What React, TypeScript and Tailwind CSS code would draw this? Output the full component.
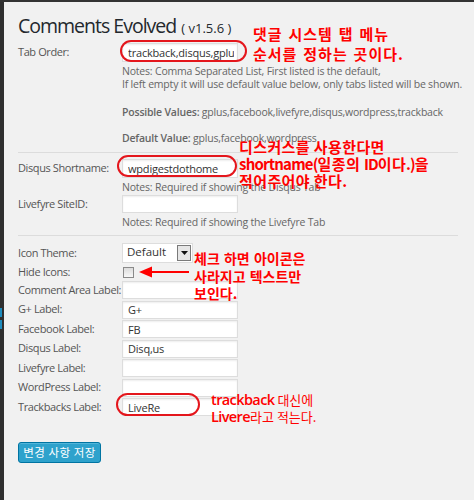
import React from "react";

const LABEL = "w-[104px] shrink-0 text-[11px] tracking-[-0.4px] text-[#555] whitespace-nowrap";
const NOTE = "text-[10.5px] leading-[13px] tracking-[-0.2px] text-[#666]";

function Field({ value = "", h = "h-[18px]" }: { value?: string; h?: string }) {
  return (
    <input
      readOnly
      value={value}
      className={`w-[116px] ${h} bg-white border border-[#dddddd] shadow-[inset_0_1px_2px_rgba(0,0,0,0.07)] pl-[5px] pr-[3px] text-[11px] tracking-[-0.2px] text-[#333] outline-none font-['Open_Sans',sans-serif]`}
    />
  );
}

function Row({ label, children, className = "" }: { label: string; children: React.ReactNode; className?: string }) {
  return (
    <div className={`flex items-center ${className}`}>
      <div className={LABEL}>{label}</div>
      {children}
    </div>
  );
}

export default function App() {
  const red = "text-[#ff0000] font-['Noto_Sans_CJK_KR',sans-serif]";
  return (
    <div className="relative w-[474px] h-[500px] bg-[#f1f1f1] border-t-2 border-[#333] flex overflow-hidden font-['Open_Sans','Noto_Sans_CJK_KR',sans-serif]">
      {/* admin sidebar edge */}
      <div className="w-[4px] shrink-0 bg-[#2f2f2f] flex flex-col">
        <div className="h-[306px]" />
        <div className="h-[9px] w-[2px] bg-[#1e8cbe]" />
        <div className="h-[3px]" />
        <div className="h-[9px] w-[2px] bg-[#1e8cbe]" />
      </div>

      <div className="flex-1 pl-[14px] flex flex-col">
        <h2 className="mt-[11.5px] leading-[24px] text-[19.5px] tracking-[-1px] text-[#23282d] whitespace-nowrap">
          Comments Evolved <span className="text-[13px] tracking-[0px] ml-[1px]">( v1.5.6 )</span>
        </h2>

        <Row label="Tab Order:" className="mt-[3.5px]">
          <Field value="trackback,disqus,gplus" h="h-[19px]" />
        </Row>
        <div className="pl-[104px]">
          <p className={`${NOTE} mt-[2.5px]`}>
            <span>Notes:</span> Comma Separated List, First listed is the default,
            <br />
            If left empty it will use default value below, only tabs listed will be shown.
          </p>
          <p className={`${NOTE} mt-[15px]`}>
            <span className="font-semibold">Possible Values:</span> gplus,facebook,livefyre,disqus,wordpress,trackback
          </p>
          <p className={`${NOTE} mt-[13px]`}>
            <span className="font-semibold">Default Value:</span> gplus,facebook,wordpress
          </p>
        </div>

        <div className="mt-[7.5px] w-[440px] h-px bg-[#dcdcdc]" />

        <Row label="Disqus Shortname:" className="mt-[6px]">
          <Field value="wpdigestdothome" h="h-[19px]" />
        </Row>
        <p className={`${NOTE} pl-[104px] mt-[2.5px]`}>Notes: Required if showing the Disqus Tab</p>
        <Row label="Livefyre SiteID:" className="mt-[1.5px]">
          <Field />
        </Row>
        <p className={`${NOTE} pl-[104px] mt-[2.5px]`}>Notes: Required if showing the Livefyre Tab</p>

        <div className="mt-[6.5px] w-[440px] h-px bg-[#dcdcdc]" />

        <Row label="Icon Theme:" className="mt-[7px]">
          <div className="w-[71px] h-[20px] bg-white border border-[#dddddd] flex items-start justify-between pl-[4px] pr-[1px]">
            <span className="text-[11.5px] leading-[15px] text-[#333]">Default</span>
            <span className="mt-[1px] w-[14px] h-[16px] border border-[#7a7a7a] bg-[#e6e6e6] flex items-center justify-center">
              <svg width="7" height="4" viewBox="0 0 7 4"><path d="M0 0h7L3.5 4z" fill="#111" /></svg>
            </span>
          </div>
        </Row>
        <Row label="Hide Icons:" className="h-[17px] mt-[1px]">
          <span className="ml-[1px] w-[11px] h-[11px] border border-[#8a8a8a] bg-gradient-to-b from-[#dcdcdc] to-[#f8f8f8]" />
        </Row>
        <Row label="Comment Area Label:"><Field /></Row>
        <Row label="G+ Label:" className="mt-[1.5px]"><Field value="G+" /></Row>
        <Row label="Facebook Label:" className="mt-[1.5px]"><Field value="FB" /></Row>
        <Row label="Disqus Label:" className="mt-[1.5px]"><Field value="Disq,us" /></Row>
        <Row label="Livefyre Label:" className="mt-[1.5px]"><Field /></Row>
        <Row label="WordPress Label:" className="mt-[1.5px]"><Field /></Row>
        <Row label="Trackbacks Label:" className="mt-[1.5px]"><Field value="LiveRe" /></Row>

        <div className="mt-[23px]">
          <button className="w-[83px] h-[21px] rounded-[3px] bg-[#2ea2cc] border border-[#0074a2] shadow-[inset_0_1px_0_rgba(120,200,230,0.5)] text-white text-[11.5px] leading-[19px] font-['Noto_Sans_CJK_KR',sans-serif] tracking-[0.5px]">
            변경 사항 저장
          </button>
        </div>
      </div>

      {/* annotation ovals */}
      <div className="absolute left-[120px] top-[38px] w-[127px] h-[22px] rounded-full border-2 border-[#e4161c]" />
      <div className="absolute left-[117px] top-[153px] w-[120px] h-[22px] rounded-full border-2 border-[#e4161c]" />
      <div className="absolute left-[116px] top-[391px] w-[84px] h-[23px] rounded-full border-2 border-[#e4161c]" />

      {/* arrow */}
      <svg className="absolute left-[138px] top-[263px]" width="52" height="14" viewBox="0 0 52 14">
        <path d="M12 7H51" stroke="#ff0000" strokeWidth="2" />
        <path d="M1 7L14 1.5V12.5z" fill="#ff0000" />
      </svg>

      {/* annotations */}
      <div className={`absolute left-[253px] top-[22px] ${red} font-bold text-[15px] leading-[20px] tracking-[1px] [word-spacing:1.5px] whitespace-nowrap`}>
        댓글 시스템 탭 메뉴
        <br />
        순서를 정하는 곳이다.
      </div>
      <div className={`absolute left-[239px] top-[136px] ${red} font-bold text-[15px] leading-[17px] tracking-[0.4px] whitespace-nowrap`}>
        디스커스를 사용한다면
        <br />
        <span className="tracking-[-0.8px]">shortname(</span>일종의 <span className="tracking-[-1px]">ID</span>이다<span className="tracking-[-1px]">.)</span>을
        <br />
        적어주어야 한다.
      </div>
      <div className={`absolute left-[194px] top-[248px] ${red} font-bold text-[14px] leading-[17.5px] tracking-[0px] [word-spacing:1px] whitespace-nowrap`}>
        체크 하면 아이콘은
        <br />
        사라지고 텍스트만
        <br />
        보인다.
      </div>
      <div className={`absolute left-[211px] top-[389px] ${red} text-[13px] leading-[17px] whitespace-nowrap`}>
        <span className="font-['Open_Sans',sans-serif] font-semibold text-[14.5px] tracking-[-0.6px]">trackback</span> 대신에
        <br />
        <span className="font-['Open_Sans',sans-serif] font-semibold text-[14.5px] tracking-[-0.6px]">Livere</span>라고 적는다.
      </div>
    </div>
  );
}
